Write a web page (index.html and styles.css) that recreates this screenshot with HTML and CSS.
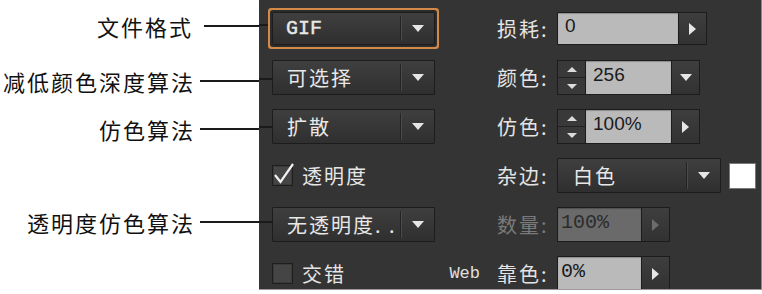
FILE: index.html
```html
<!DOCTYPE html>
<html lang="zh-CN">
<head>
    <meta charset="UTF-8">
    <title>存储为 Web 所用格式 - GIF 设置</title>
    <link rel="stylesheet" href="styles.css">
</head>
<body>

    <div class="page">
        <!-- Callout labels -->
        <div class="labels">
            <div class="label-row row-a">
                <span class="label-text">文件格式</span><span class="leader leader-short"></span>
            </div>
            <div class="label-row row-b">
                <span class="label-text">减低颜色深度算法</span><span class="leader"></span>
            </div>
            <div class="label-row row-c">
                <span class="label-text">仿色算法</span><span class="leader"></span>
            </div>
            <div class="label-row row-d"></div>
            <div class="label-row row-e">
                <span class="label-text">透明度仿色算法</span><span class="leader"></span>
            </div>
        </div>

        <!-- Settings panel -->
        <div class="panel">
            <div class="row">
                <div class="left">
                    <span class="wire wire-1"></span>
                    <div class="select select-focus select-short">
                        <span class="select-text mono">GIF</span>
                        <span class="select-btn"><i class="tri-down"></i></span>
                    </div>
                </div>
                <div class="right">
                    <span class="field-label">损耗:</span>
                    <div class="input input-short input-loss">0</div>
                    <span class="btn btn-short"><i class="tri-right"></i></span>
                </div>
            </div>

            <div class="row">
                <div class="left">
                    <span class="wire wire-2"></span>
                    <div class="select">
                        <span class="select-text">可选择</span>
                        <span class="select-btn"><i class="tri-down"></i></span>
                    </div>
                </div>
                <div class="right">
                    <span class="field-label">颜色:</span>
                    <span class="spin"><span class="spin-half"><i class="tri-up-s"></i></span><span class="spin-half"><i class="tri-down-s"></i></span></span>
                    <div class="input input-mid">256</div>
                    <span class="btn"><i class="tri-down"></i></span>
                </div>
            </div>

            <div class="row">
                <div class="left">
                    <span class="wire"></span>
                    <div class="select">
                        <span class="select-text">扩散</span>
                        <span class="select-btn"><i class="tri-down"></i></span>
                    </div>
                </div>
                <div class="right">
                    <span class="field-label">仿色:</span>
                    <span class="spin"><span class="spin-half"><i class="tri-up-s"></i></span><span class="spin-half"><i class="tri-down-s"></i></span></span>
                    <div class="input input-mid">100%</div>
                    <span class="btn"><i class="tri-right"></i></span>
                </div>
            </div>

            <div class="row">
                <div class="left check-row">
                    <span class="checkbox">
                        <svg width="21" height="21" viewBox="0 0 21 21"><path d="M3 10 L8.5 17 L21 -1" fill="none" stroke="#f2f2f2" stroke-width="2.2"/></svg>
                    </span>
                    <span class="check-text">透明度</span>
                </div>
                <div class="right">
                    <span class="field-label">杂边:</span>
                    <div class="select select-matte">
                        <span class="select-text">白色</span>
                        <span class="select-btn"><i class="tri-down"></i></span>
                    </div>
                    <span class="swatch"></span>
                </div>
            </div>

            <div class="row">
                <div class="left">
                    <span class="wire wire-5"></span>
                    <div class="select">
                        <span class="select-text">无透明度. .</span>
                        <span class="select-btn"><i class="tri-down"></i></span>
                    </div>
                </div>
                <div class="right">
                    <span class="field-label dim">数量:</span>
                    <div class="input input-small input-disabled mono">100%</div>
                    <span class="btn"><i class="tri-right tri-dim"></i></span>
                </div>
            </div>

            <div class="row">
                <div class="left check-row">
                    <span class="checkbox"></span>
                    <span class="check-text">交错</span>
                    <span class="web mono">Web</span>
                </div>
                <div class="right">
                    <span class="field-label">靠色:</span>
                    <div class="input input-small mono">0%</div>
                    <span class="btn"><i class="tri-right"></i></span>
                </div>
            </div>
        </div>
    </div>

</body>
</html>
```

FILE: styles.css
```css
/* General */
body {
    margin: 0;
    background-color: #fff;
    font-family: "Noto Sans CJK SC", sans-serif;
}

.page {
    display: flex;
    width: 762px;
    height: 294px;
    overflow: hidden;
}

.mono {
    font-family: "Liberation Mono", monospace;
}

/* Callout labels on the left */
.labels {
    width: 259px;
    flex: none;
    display: flex;
    flex-direction: column;
}

.label-row {
    display: flex;
    align-items: center;
    justify-content: flex-end;
    font-size: 22px;
    letter-spacing: 2px;
    color: #111;
    white-space: nowrap;
}

.row-a { height: 51px; }
.row-b { height: 59px; }
.row-c { height: 37px; }
.row-d { height: 50px; }
.row-e { height: 50px; }

.leader {
    flex: none;
    width: 59px;
    height: 2px;
    margin-left: 5px;
    background-color: #1a1a1a;
}

.leader-short {
    width: 55px;
    margin-left: 11px;
}

/* Dark panel */
.panel {
    flex: 1;
    height: 290px;
    box-sizing: border-box;
    padding-top: 4px;
    background-color: #343434;
    border-right: 1px solid #8a8a8a;
    border-bottom: 1px solid #9a9a9a;
    overflow: hidden;
    color: #e4e4e4;
}

.row {
    display: flex;
    height: 49px;
}

.left {
    width: 231px;
    flex: none;
    display: flex;
    align-items: center;
}

.right {
    flex: 1;
    display: flex;
    align-items: center;
    padding-left: 7px;
}

.field-label {
    width: 60px;
    flex: none;
    font-size: 20px;
    letter-spacing: 2px;
    white-space: nowrap;
}

.field-label.dim {
    color: #7a7a7a;
}

/* Leader continues inside the panel */
.wire {
    flex: none;
    width: 13px;
    height: 2px;
    background-color: #1a1a1a;
}

.wire-1 { margin-bottom: 7px; }
.wire-2 { margin-top: 3px; }
.wire-5 { margin-bottom: 5px; }

/* Dropdown */
.select {
    width: 163px;
    height: 35px;
    flex: none;
    box-sizing: border-box;
    display: flex;
    align-items: center;
    border: 1px solid #1c1c1c;
    border-radius: 1px;
    background: linear-gradient(#3f3f3f, #2f2f2f);
    color: #e8e8e8;
    font-size: 20px;
    letter-spacing: 2px;
}

.select-short {
    height: 33px;
}

.select-focus {
    box-shadow: 0 0 0 2px #2b2b2b, 0 0 0 4px #d38a48;
}

.select-text {
    flex: 1;
    padding-left: 14px;
    white-space: nowrap;
    overflow: hidden;
}

.select-text.mono {
    font-size: 20px;
    letter-spacing: 0;
    padding-left: 13px;
    -webkit-text-stroke: 0.4px #e8e8e8;
}

.select-btn {
    flex: none;
    width: 33px;
    align-self: stretch;
    margin: 3px 0;
    display: flex;
    align-items: center;
    justify-content: center;
    border-left: 1px solid #242424;
    box-shadow: inset 1px 0 #4a4a4a;
}

.select-matte {
    width: 164px;
}

.select-matte .select-text {
    padding-left: 15px;
}

/* Triangles */
.tri-down {
    width: 0;
    height: 0;
    border-left: 6px solid transparent;
    border-right: 6px solid transparent;
    border-top: 7px solid #e6e6e6;
}

.tri-right {
    width: 0;
    height: 0;
    border-top: 6px solid transparent;
    border-bottom: 6px solid transparent;
    border-left: 7px solid #e6e6e6;
}

.tri-right.tri-dim {
    border-left-color: #6c6c6c;
}

.tri-up-s {
    width: 0;
    height: 0;
    border-left: 5px solid transparent;
    border-right: 5px solid transparent;
    border-bottom: 5px solid #dcdcdc;
}

.tri-down-s {
    width: 0;
    height: 0;
    border-left: 5px solid transparent;
    border-right: 5px solid transparent;
    border-top: 5px solid #dcdcdc;
}

/* Text inputs */
.input {
    flex: none;
    height: 35px;
    box-sizing: border-box;
    display: flex;
    align-items: center;
    padding: 0 0 5px 7px;
    border: 1px solid #1c1c1c;
    background-color: #bababa;
    box-shadow: inset 0 1px 1px rgba(0, 0, 0, 0.25);
    color: #1a1a1a;
    font-family: "Liberation Sans", sans-serif;
    font-size: 19px;
}

.input.mono {
    font-family: "Liberation Mono", monospace;
    font-size: 20px;
    padding-left: 3px;
}

.input-short { height: 33px; }
.input-loss { width: 122px; }
.input-mid { width: 87px; }
.input-small { width: 85px; }

.input-disabled {
    background-color: #6a6a6a;
    color: #2c2c2c;
}

.btn {
    flex: none;
    width: 28px;
    height: 35px;
    box-sizing: border-box;
    display: flex;
    align-items: center;
    justify-content: center;
    border: 1px solid #1c1c1c;
    border-left: none;
    background: linear-gradient(#3e3e3e, #323232);
}

.btn-short { height: 33px; }

/* Spinner */
.spin {
    flex: none;
    width: 28px;
    height: 35px;
    box-sizing: border-box;
    display: flex;
    flex-direction: column;
    border: 1px solid #1c1c1c;
    border-right: none;
    background-color: #393939;
}

.spin-half {
    flex: 1;
    display: flex;
    align-items: center;
    justify-content: center;
}

.spin-half + .spin-half {
    border-top: 1px solid #222;
}

/* Checkboxes */
.check-row {
    padding-left: 13px;
    box-sizing: border-box;
}

.checkbox {
    flex: none;
    width: 21px;
    height: 21px;
    box-sizing: border-box;
    border: 1px solid #1e1e1e;
    background-color: #454545;
    box-shadow: inset 0 0 0 1px #3a3a3a;
}

.checkbox svg {
    display: block;
    margin: -1px;
    overflow: visible;
}

.check-text {
    margin-left: 9px;
    font-size: 20px;
    letter-spacing: 2px;
    color: #e6e6e6;
}

.web {
    margin-left: auto;
    margin-right: 10px;
    font-size: 17px;
    color: #e0e0e0;
}

.swatch {
    flex: none;
    width: 27px;
    height: 26px;
    margin-left: 8px;
    box-sizing: border-box;
    border: 1px solid #777;
    background-color: #fff;
}
```
